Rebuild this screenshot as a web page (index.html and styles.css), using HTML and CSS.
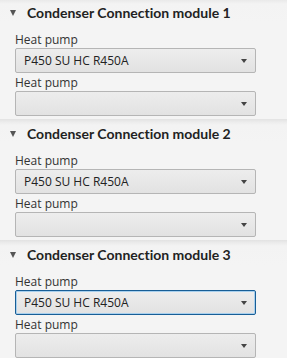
FILE: index.html
```html
<!DOCTYPE html>
<html lang="en">
  <head>
    <meta charset="UTF-8" />
    <title>Condenser Connection</title>
    <link rel="stylesheet" href="styles.css">
  </head>
  <body>
    <div class="panes">
      <div class="pane first">
        <div class="pane-title"><span class="arrow"></span>Condenser Connection module 1</div>
        <div class="pane-content">
          <div class="field-label">Heat pump</div>
          <div class="combo"><span class="combo-text">P450 SU HC R450A</span><span class="combo-arrow"></span></div>
          <div class="field-label second">Heat pump</div>
          <div class="combo"><span class="combo-text"></span><span class="combo-arrow"></span></div>
        </div>
      </div>
      <div class="pane">
        <div class="pane-title"><span class="arrow"></span>Condenser Connection module 2</div>
        <div class="pane-content">
          <div class="field-label">Heat pump</div>
          <div class="combo"><span class="combo-text">P450 SU HC R450A</span><span class="combo-arrow"></span></div>
          <div class="field-label second">Heat pump</div>
          <div class="combo"><span class="combo-text"></span><span class="combo-arrow"></span></div>
        </div>
      </div>
      <div class="pane">
        <div class="pane-title"><span class="arrow"></span>Condenser Connection module 3</div>
        <div class="pane-content">
          <div class="field-label">Heat pump</div>
          <div class="combo focused"><span class="combo-text">P450 SU HC R450A</span><span class="combo-arrow"></span></div>
          <div class="field-label second">Heat pump</div>
          <div class="combo"><span class="combo-text"></span><span class="combo-arrow"></span></div>
        </div>
      </div>
    </div>
  </body>
</html>
```

FILE: styles.css
```css
* {
  margin: 0;
  padding: 0;
  box-sizing: border-box;
}

body {
  font-family: "Open Sans", "Noto Sans", sans-serif;
  background-color: #f4f4f4;
  color: #333;
  overflow: hidden;
}

.panes {
  margin-top: -2px;
}

.pane {
  height: 121px;
  display: flex;
  flex-direction: column;
}

.pane-title {
  height: 25px;
  padding-top: 3px;
  display: flex;
  align-items: center;
  font-family: Lato, "Open Sans", sans-serif;
  font-size: 14px;
  font-weight: bold;
  font-variant-ligatures: none;
  color: #222;
  background: linear-gradient(#e2e2e2 0, #ececec 3px, #f3f3f3 6px, #f4f4f4 100%);
}

.arrow {
  width: 0;
  height: 0;
  margin: 1px 11px 0 10px;
  border-left: 3.5px solid transparent;
  border-right: 3.5px solid transparent;
  border-top: 6px solid #555;
}

.pane-content {
  padding: 8px 31px 0 15px;
}

.field-label {
  height: 17px;
  line-height: 17px;
  font-size: 12px;
}

.field-label.second {
  margin-top: 1px;
}

.combo {
  height: 25px;
  display: flex;
  align-items: center;
  justify-content: space-between;
  padding: 0 8px 0 8px;
  font-size: 12px;
  color: #222;
  border: 1px solid #b5b5b5;
  border-radius: 2px;
  background: linear-gradient(#ededed, #e2e2e2);
}

.combo.focused {
  border-color: #185e96;
  box-shadow: inset 0 0 0 1px #a8d0ee;
}

.combo-arrow {
  width: 0;
  height: 0;
  margin-top: 1px;
  border-left: 3.5px solid transparent;
  border-right: 3.5px solid transparent;
  border-top: 4px solid #444;
}
```
